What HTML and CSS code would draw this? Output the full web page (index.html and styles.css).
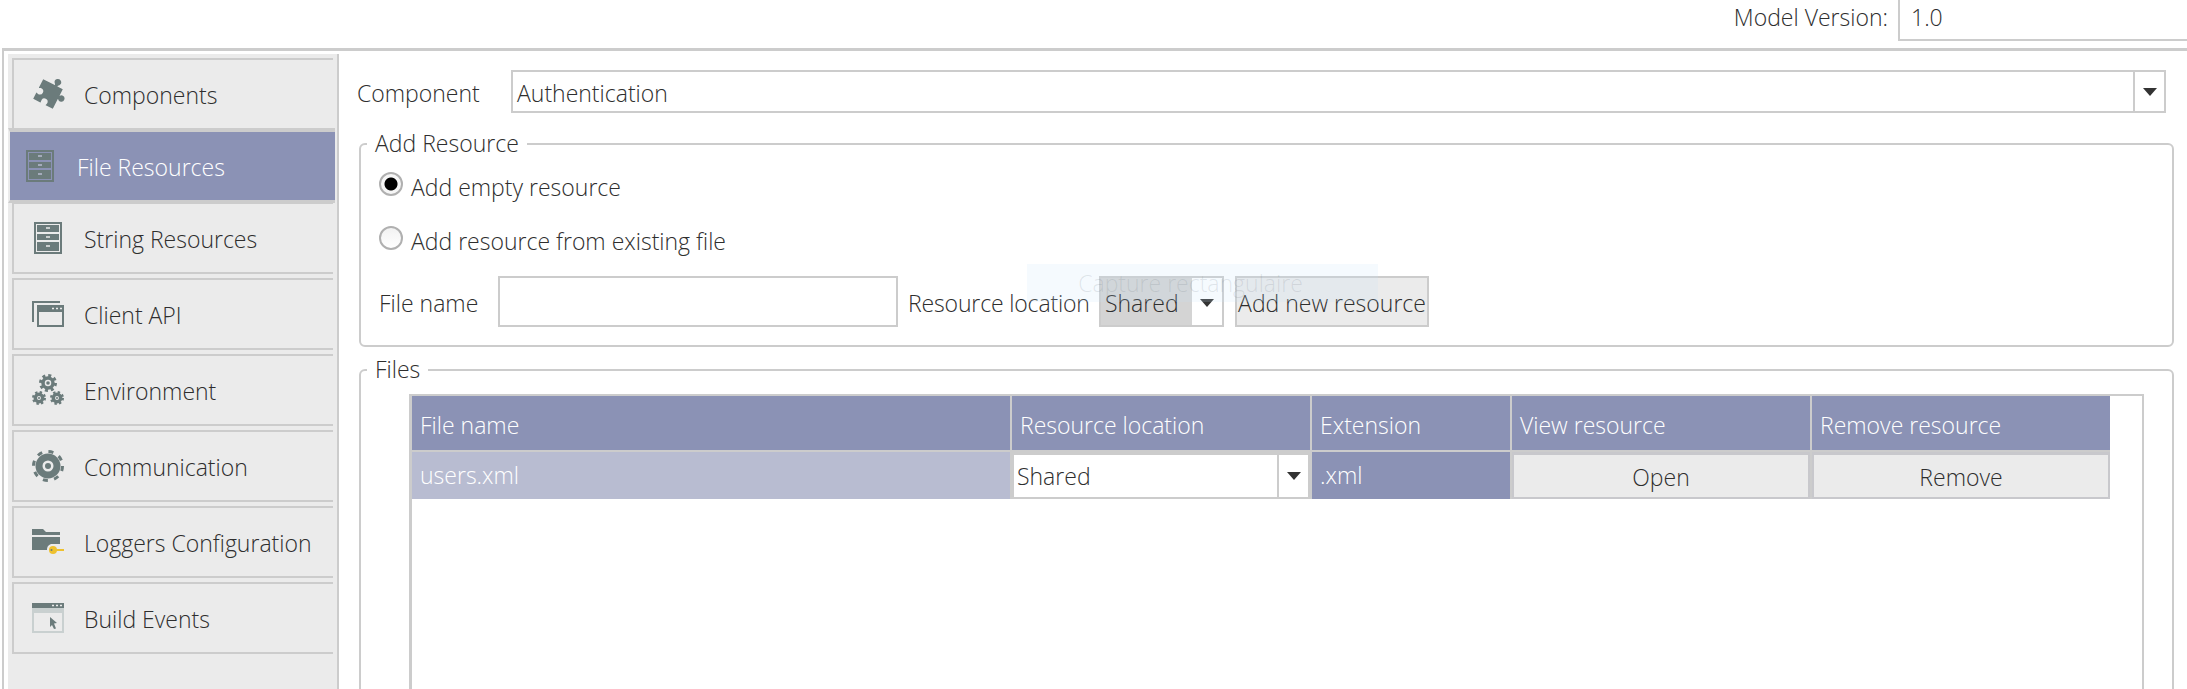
FILE: index.html
```html
<!DOCTYPE html>
<html lang="en">
<head>
<meta charset="utf-8">
<title>Model</title>
<link rel="stylesheet" href="styles.css">
</head>
<body>
<header class="topbar">
  <span class="version-label">Model Version:</span>
  <div class="version-field">1.0</div>
</header>
<main class="main">
  <nav class="sidebar">
    <div class="tab tab-first">
      <svg class="icon" viewBox="0 0 32 32"><g transform="rotate(27 16 16)"><path class="fill" d="M5 5H18C18.500 5 17.600 3.500 16.800 3A3.300 3.300 0 1 1 22.200 3C21.400 3.500 20.500 5 21 5H27V12C27 12.500 28 11.600 28.500 11A3.300 3.300 0 1 1 28.500 17C28 16.400 27 15.500 27 16V27H19C18.500 27 19.500 25.500 19.500 24A3.300 3.300 0 0 0 13 24C13 25.500 13.500 27 13 27H5V20C5 19.500 6 20.500 8 20.500A3.400 3.400 0 0 0 8 13.800C6 13.800 5 14.800 5 14.300Z"/></g></svg>
      <span>Components</span>
    </div>
    <div class="tab tab-selected">
      <svg class="icon icon-narrow" viewBox="0 0 28 32"><rect class="outline" x="1" y="1" width="26" height="30"/><rect class="fill" x="3" y="3" width="22" height="7"/><rect class="fill" x="3" y="12" width="22" height="6"/><rect class="fill" x="3" y="20" width="22" height="9"/><path class="slot" d="M12 6h4M12 15h4M12 24h4"/></svg>
      <span>File Resources</span>
    </div>
    <div class="tab tab-cabinet">
      <svg class="icon icon-narrow" viewBox="0 0 28 32"><rect class="outline" x="1" y="1" width="26" height="30"/><rect class="fill" x="3" y="3" width="22" height="7"/><rect class="fill" x="3" y="12" width="22" height="6"/><rect class="fill" x="3" y="20" width="22" height="9"/><path class="slot" d="M12 6h4M12 15h4M12 24h4"/></svg>
      <span>String Resources</span>
    </div>
    <div class="tab tab-spaced">
      <svg class="icon" viewBox="0 0 32 32"><path class="fill" d="M0 3h28v2H2v19H0z"/><path class="fill" fill-rule="evenodd" d="M5 7h27v22H5zM7 14v13h23V14z"/><path class="slot" d="M20 10.500h2M24 10.500h2M28 10.500h2"/></svg>
      <span>Client API</span>
    </div>
    <div class="tab tab-spaced">
      <svg class="icon" viewBox="0 0 32 32"><circle cx="16" cy="9" r="7.500" class="teeth"/><circle cx="16" cy="9" r="5" class="ring"/><circle cx="16" cy="9" r="1.800" class="dot"/><circle cx="7" cy="24" r="5.500" class="teeth teeth-small"/><circle cx="7" cy="24" r="3.700" class="ring"/><circle cx="7" cy="24" r="1" class="dot"/><circle cx="25" cy="24" r="5.500" class="teeth teeth-small"/><circle cx="25" cy="24" r="3.700" class="ring"/><circle cx="25" cy="24" r="1" class="dot"/></svg>
      <span>Environment</span>
    </div>
    <div class="tab tab-spaced">
      <svg class="icon" viewBox="0 0 32 32"><circle cx="16" cy="16" r="14.500" class="teeth-big"/><circle cx="16" cy="16" r="9" class="ring-big"/><circle cx="16" cy="16" r="3" class="dot"/></svg>
      <span>Communication</span>
    </div>
    <div class="tab tab-spaced">
      <svg class="icon" viewBox="0 0 32 26"><path class="fill" d="M0 0h11l3 3h14v3H0zM0 8h28v7h-9a6 6 0 0 0-4 6H0z"/><circle class="key" cx="21" cy="21" r="4"/><path class="key-bar" d="M23 21h9"/><circle class="dot" cx="19.500" cy="21" r="1"/></svg>
      <span>Loggers Configuration</span>
    </div>
    <div class="tab tab-spaced">
      <svg class="icon" viewBox="0 0 32 30"><rect class="window" x="0" y="0" width="32" height="30"/><rect class="fill" x="0" y="0" width="32" height="5"/><path class="slot" d="M20 2.500h2M24 2.500h2M28 2.500h2"/><rect class="inner" x="2" y="10" width="28" height="18"/><path class="fill" d="M18 14l7 6-3 .5 2 5-2 .500-2-4-2 2z"/></svg>
      <span>Build Events</span>
    </div>
  </nav>
  <section class="content">
    <div class="component-row">
      <label class="component-label">Component</label>
      <div class="combo combo-wide">
        <span class="combo-value">Authentication</span>
        <span class="combo-arrow"><i class="caret"></i></span>
      </div>
    </div>
    <fieldset class="group group-add">
      <legend>Add Resource</legend>
      <label class="radio-row"><input type="radio" name="mode" class="radio" checked><span>Add empty resource</span></label>
      <label class="radio-row radio-row-second"><input type="radio" name="mode" class="radio"><span>Add resource from existing file</span></label>
      <div class="file-row">
        <span class="file-label">File name</span>
        <input class="file-input" type="text">
        <span class="location-label">Resource location</span>
        <div class="combo combo-small">
          <span class="combo-value combo-value-gray">Shared</span>
          <span class="combo-arrow-small"><i class="caret"></i></span>
        </div>
        <button class="add-button">Add new resource</button>
      </div>
      <div class="capture"><span>Capture rectangulaire</span></div>
    </fieldset>
    <fieldset class="group group-files">
      <legend>Files</legend>
      <div class="grid">
        <div class="grid-table">
          <div class="cell head">File name</div>
          <div class="cell head">Resource location</div>
          <div class="cell head">Extension</div>
          <div class="cell head">View resource</div>
          <div class="cell head">Remove resource</div>
          <div class="cell name">users.xml</div>
          <div class="cell cell-combo">
            <span class="combo-value">Shared</span>
            <span class="combo-arrow-row"><i class="caret"></i></span>
          </div>
          <div class="cell ext">.xml</div>
          <div class="cell cell-btn">Open</div>
          <div class="cell cell-btn">Remove</div>
        </div>
      </div>
    </fieldset>
  </section>
</main>
</body>
</html>
```
FILE: styles.css
```css
* { box-sizing: border-box; }
html, body { margin: 0; height: 689px; overflow: hidden; background: #fff; }
body {
  font-family: "Open Sans", "Liberation Sans", sans-serif;
  font-weight: 300;
  font-size: 23px;
  color: #2e2e2e;
}
.topbar { height: 48px; display: flex; justify-content: flex-end; align-items: flex-start; }
.version-label { margin-top: 3px; margin-right: 10px; line-height: 28px; }
.version-field { width: 289px; height: 41px; border-left: 2px solid #ccc; border-bottom: 2px solid #ccc; padding: 3px 0 0 11px; line-height: 28px; }
.main { display: flex; height: 641px; margin-left: 2px; border-left: 2px solid #ccc; border-top: 3px solid #ccc; padding: 3px 0 0 4px; }
.sidebar { width: 331px; flex: none; background: #ebebeb; border-right: 2px solid #ccc; padding: 4px 0 0 4px; margin-bottom: -3px; }
.tab { height: 72px; width: 321px; display: flex; align-items: center; gap: 20px; padding-left: 18px; border: 2px solid #ccc; border-right: 0; }
.tab-spaced { margin-top: 4px; }
.tab-cabinet { padding-left: 20px; gap: 22px; }
.tab span { position: relative; top: 1px; }
.tab-selected { position: relative; width: 327px; height: 75px; margin: -2px 0 -1px -4px; padding-left: 16px; gap: 23px; background: #8b92b5; color: #fff; border: 0; border-top: 4px solid #ccc; border-bottom: 3px solid #ccc; border-left: 2px solid #ebebeb; }
.tab-selected span { top: 1px; }
.icon { width: 32px; flex: none; height: 32px; overflow: visible; }
.icon-narrow { width: 28px; }
.fill { fill: #6b7b7b; }
.dot { fill: #6b7b7b; }
.outline { fill: #ebebeb; stroke: #6b7b7b; stroke-width: 2; }
.slot { stroke: #ebebeb; stroke-width: 1.500; fill: none; }
.tab-selected .outline { fill: #8b92b5; }
.tab-selected .slot { stroke: #b8bcd1; }
.teeth { stroke: #6b7b7b; stroke-width: 3; stroke-dasharray: 3 2.890; fill: none; }
.teeth-small { stroke-dasharray: 2.200 2.120; }
.ring { stroke: #6b7b7b; stroke-width: 3.500; fill: #ebebeb; }
.teeth-big { fill: none; stroke: #6b7b7b; stroke-width: 3; stroke-dasharray: 5 6.390; }
.ring-big { fill: #ebebeb; stroke: #6b7b7b; stroke-width: 7; }
.key { fill: #eec12f; }
.key-bar { stroke: #eec12f; stroke-width: 2; }
.window { fill: #c9d0d0; }
.inner { fill: #ebebeb; }
.content { flex: 1; min-width: 0; padding: 16px 0 0 0; position: relative; }
.component-row { display: flex; align-items: stretch; height: 43px; margin-left: 18px; width: 1809px; }
.component-label { width: 154px; line-height: 47px; }
.combo { display: flex; border: 2px solid #ccc; background: #fff; }
.combo-wide { flex: 1; }
.combo-value { flex: 1; padding-left: 4px; line-height: 41px; }
.combo-wide .combo-value { line-height: 42px; }
.combo-arrow { width: 31px; border-left: 2px solid #ccc; display: flex; align-items: center; justify-content: center; }
.caret { display: block; width: 0; height: 0; border-left: 7px solid transparent; border-right: 7px solid transparent; border-top: 8px solid #333; }
.group { position: relative; margin: 16px 0 0 20px; padding: 0 0 0 18px; width: 1815px; border: 2px solid #ccc; border-radius: 6px; min-width: 0; }
.group legend { padding: 0 8px; margin-left: -12px; line-height: 28px; height: 30px; }
.group-add { padding-bottom: 18px; }
.radio-row { display: flex; height: 24px; gap: 8px; margin-top: 13px; }
.radio-row span { line-height: 28px; position: relative; top: 1px; }
.radio-row-second { margin-top: 30px; }
.radio { appearance: none; margin: 0; width: 24px; height: 24px; border-radius: 50%; border: 2px solid #b0b0b0; background: linear-gradient(#f2f2f2, #fff); flex: none; }
.radio:checked { background: radial-gradient(circle, #000 0 6px, #f6f6f6 7px); }
.file-row { display: flex; height: 51px; align-items: stretch; margin-top: 26px; }
.file-label { width: 119px; line-height: 55px; }
.file-input { width: 400px; border: 2px solid #ccc; background: #fff; padding: 0; margin: 0; }
.location-label { margin-left: 10px; width: 191px; line-height: 55px; white-space: nowrap; letter-spacing: -.15px; }
.combo-small { width: 125px; }
.combo-value-gray { background: #d4d4d4; padding-left: 4px; line-height: 51px; flex: none; width: 91px; }
.combo-arrow-small { flex: 1; display: flex; justify-content: center; padding-top: 21px; }
.add-button { margin-left: 11px; width: 194px; border: 2px solid #ccc; background: #ebebeb; font: inherit; color: inherit; padding: 2px 0 0; white-space: nowrap; }
.capture { position: absolute; left: 666px; top: 105px; width: 351px; height: 38px; padding-right: 24px; background: rgba(200, 225, 250, .18); display: flex; align-items: center; justify-content: center; color: rgba(100, 110, 120, .16); }
.group-files { margin-top: 8px; height: 400px; }
.grid { margin: 9px 0 0 30px; width: 1735px; height: 360px; border: 2px solid #ccc; border-left-width: 3px; border-bottom: 0; }
.grid-table { display: grid; grid-template-columns: 598px 298px 198px 298px 298px; gap: 2px; width: 1698px; background: #ccc; }
.cell { display: flex; align-items: center; white-space: nowrap; }
.head { height: 54px; background: #8b92b5; color: #fff; padding: 3px 0 0 8px; }
.name { height: 47px; background: #b8bcd1; color: #fff; padding: 0 0 1px 8px; }
.cell-combo { height: 47px; background: #fff; border: 2px solid #ccc; border-top-width: 3px; }
.cell-combo .combo-value { flex: 1; padding-left: 3px; line-height: 46px; }
.combo-arrow-row { width: 31px; height: 100%; border-left: 2px solid #ccc; display: flex; align-items: center; justify-content: center; }
.ext { height: 47px; background: #8b92b5; color: #fff; padding: 0 0 1px 8px; }
.cell-btn { height: 47px; background: #ebebeb; border: 2px solid #c8c8cc; border-top-width: 3px; justify-content: center; padding-top: 2px; }
```
